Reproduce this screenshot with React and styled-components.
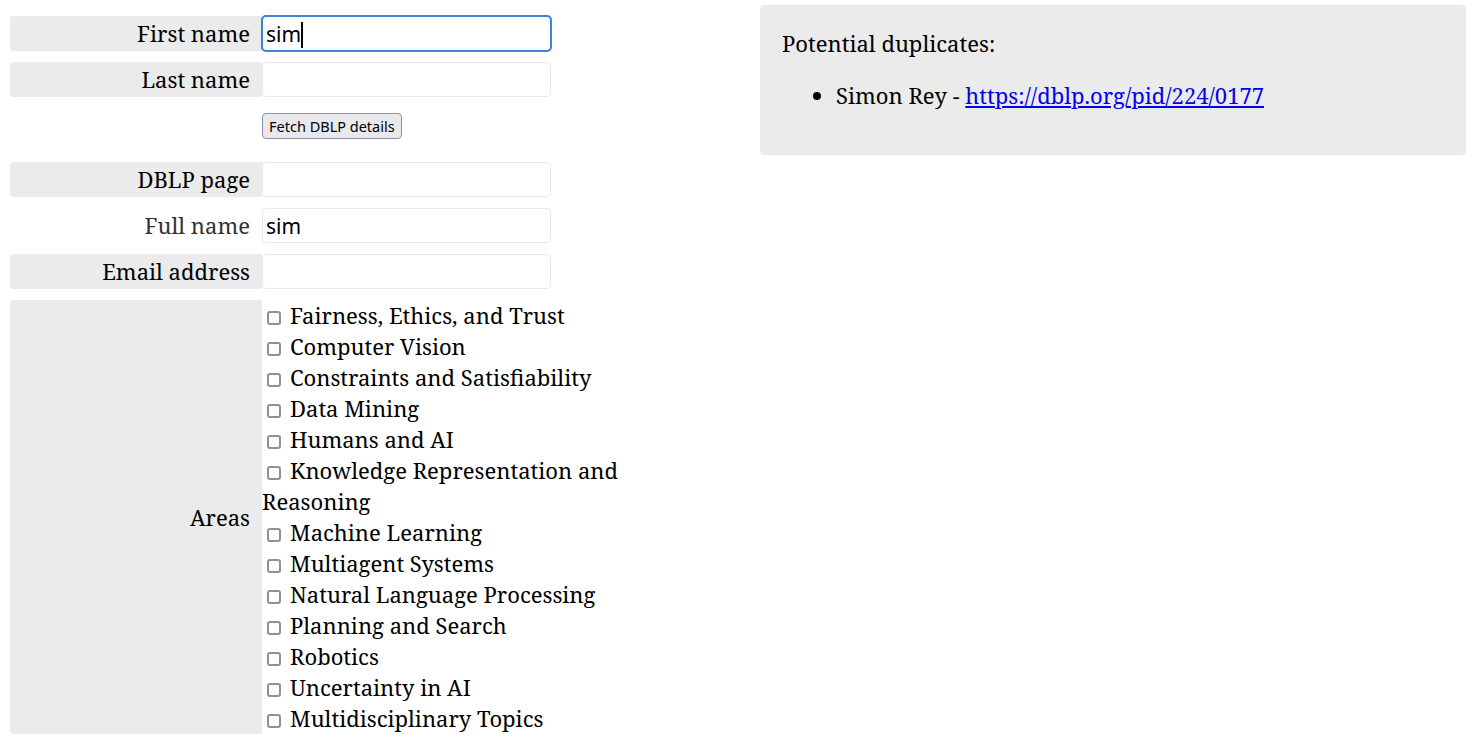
import React from 'react';
import styled, { createGlobalStyle } from 'styled-components';

const areas = [
	'Fairness, Ethics, and Trust',
	'Computer Vision',
	'Constraints and Satisfiability',
	'Data Mining',
	'Humans and AI',
	'Knowledge Representation and Reasoning',
	'Machine Learning',
	'Multiagent Systems',
	'Natural Language Processing',
	'Planning and Search',
	'Robotics',
	'Uncertainty in AI',
	'Multidisciplinary Topics',
];

export default function App() {
	return (
		<>
			<GlobalStyle />
			<Page>
				<Form>
					<Row>
						<Label>First name</Label>
						<Field>
							<Input defaultValue="sim" $focused />
							<Caret />
						</Field>
					</Row>
					<Row>
						<Label>Last name</Label>
						<Input />
					</Row>
					<ButtonRow>
						<Button>Fetch DBLP details</Button>
					</ButtonRow>
					<Row>
						<Label>DBLP page</Label>
						<Input />
					</Row>
					<Row>
						<Label $plain>Full name</Label>
						<Input defaultValue="sim" />
					</Row>
					<Row>
						<Label>Email address</Label>
						<Input />
					</Row>
					<Row>
						<Label>Areas</Label>
						<AreaList>
							{areas.map((a) => (
								<Area key={a}>
									<Check type="checkbox" />
									{a}
								</Area>
							))}
						</AreaList>
					</Row>
				</Form>
				<Panel>
					<PanelTitle>Potential duplicates:</PanelTitle>
					<List>
						<li>
							Simon Rey - <a href="#">https://dblp.org/pid/224/0177</a>
						</li>
					</List>
				</Panel>
			</Page>
		</>
	);
}

const GlobalStyle = createGlobalStyle`
	body {
		margin: 0;
		font-family: "Noto Serif", "DejaVu Serif", serif;
		font-size: 22px;
		color: #000;
		background: #fff;
	}
`;

const Page = styled.div`
	display: flex;
	align-items: flex-start;
	padding: 5px 11px 5px 10px;
	gap: 10px;
`;

const Form = styled.div`
	width: 740px;
	padding-top: 11px;
	display: flex;
	flex-direction: column;
	gap: 11px;
`;

const Row = styled.div`
	display: flex;
	align-items: stretch;
`;

const Label = styled.div`
	width: 252px;
	box-sizing: border-box;
	padding: 0 12px 0 0;
	line-height: 31px;
	background: ${(p) => (p.$plain ? 'transparent' : '#ebebeb')};
	color: ${(p) => (p.$plain ? '#333' : '#000')};
	border-radius: 4px 0 0 4px;
	display: flex;
	align-items: center;
	justify-content: flex-end;
`;

const Field = styled.div`
	position: relative;
	display: flex;
`;

const Caret = styled.span`
	position: absolute;
	left: 39px;
	top: 6px;
	width: 2px;
	height: 26px;
	background: #000;
`;

const Input = styled.input`
	width: 289px;
	height: 35px;
	box-sizing: border-box;
	margin: 0;
	padding: 0 3px;
	font-family: "Noto Sans", "DejaVu Sans", sans-serif;
	font-size: 21px;
	color: #000;
	background: #fff;
	border: 1px solid #eaeaea;
	border-radius: 4px;
	outline: ${(p) => (p.$focused ? '2px solid #3b82d9' : 'none')};
	outline-offset: -1px;
`;

const ButtonRow = styled.div`
	display: flex;
	align-items: flex-start;
	height: 43px;
	box-sizing: border-box;
	padding: 5px 0 0 252px;
`;

const Button = styled.button`
	font-family: "Noto Sans", "DejaVu Sans", sans-serif;
	font-size: 14.5px;
	padding: 0 6px;
	height: 26px;
	background: #e9e9ed;
	border: 1px solid #8f8f9d;
	border-radius: 4px;
	color: #000;
`;

const AreaList = styled.div`
	width: 360px;
`;

const Area = styled.label`
	display: block;
	line-height: 31px;
`;

const Check = styled.input`
	appearance: none;
	width: 14px;
	height: 14px;
	box-sizing: border-box;
	margin: 0 9px 0 5px;
	vertical-align: -1px;
	background: #fff;
	border: 2px solid #8f8f9d;
	border-radius: 3px;
`;

const Panel = styled.div`
	flex: 1;
	background: #ebebeb;
	border-radius: 4px;
	padding: 22px 22px 20px;
	height: 150px;
	box-sizing: border-box;
`;

const PanelTitle = styled.div`
	line-height: 32px;
`;

const List = styled.ul`
	margin: 20px 0 0;
	padding-left: 54px;
	line-height: 32px;
	a {
		color: #0000ee;
	}
`;
